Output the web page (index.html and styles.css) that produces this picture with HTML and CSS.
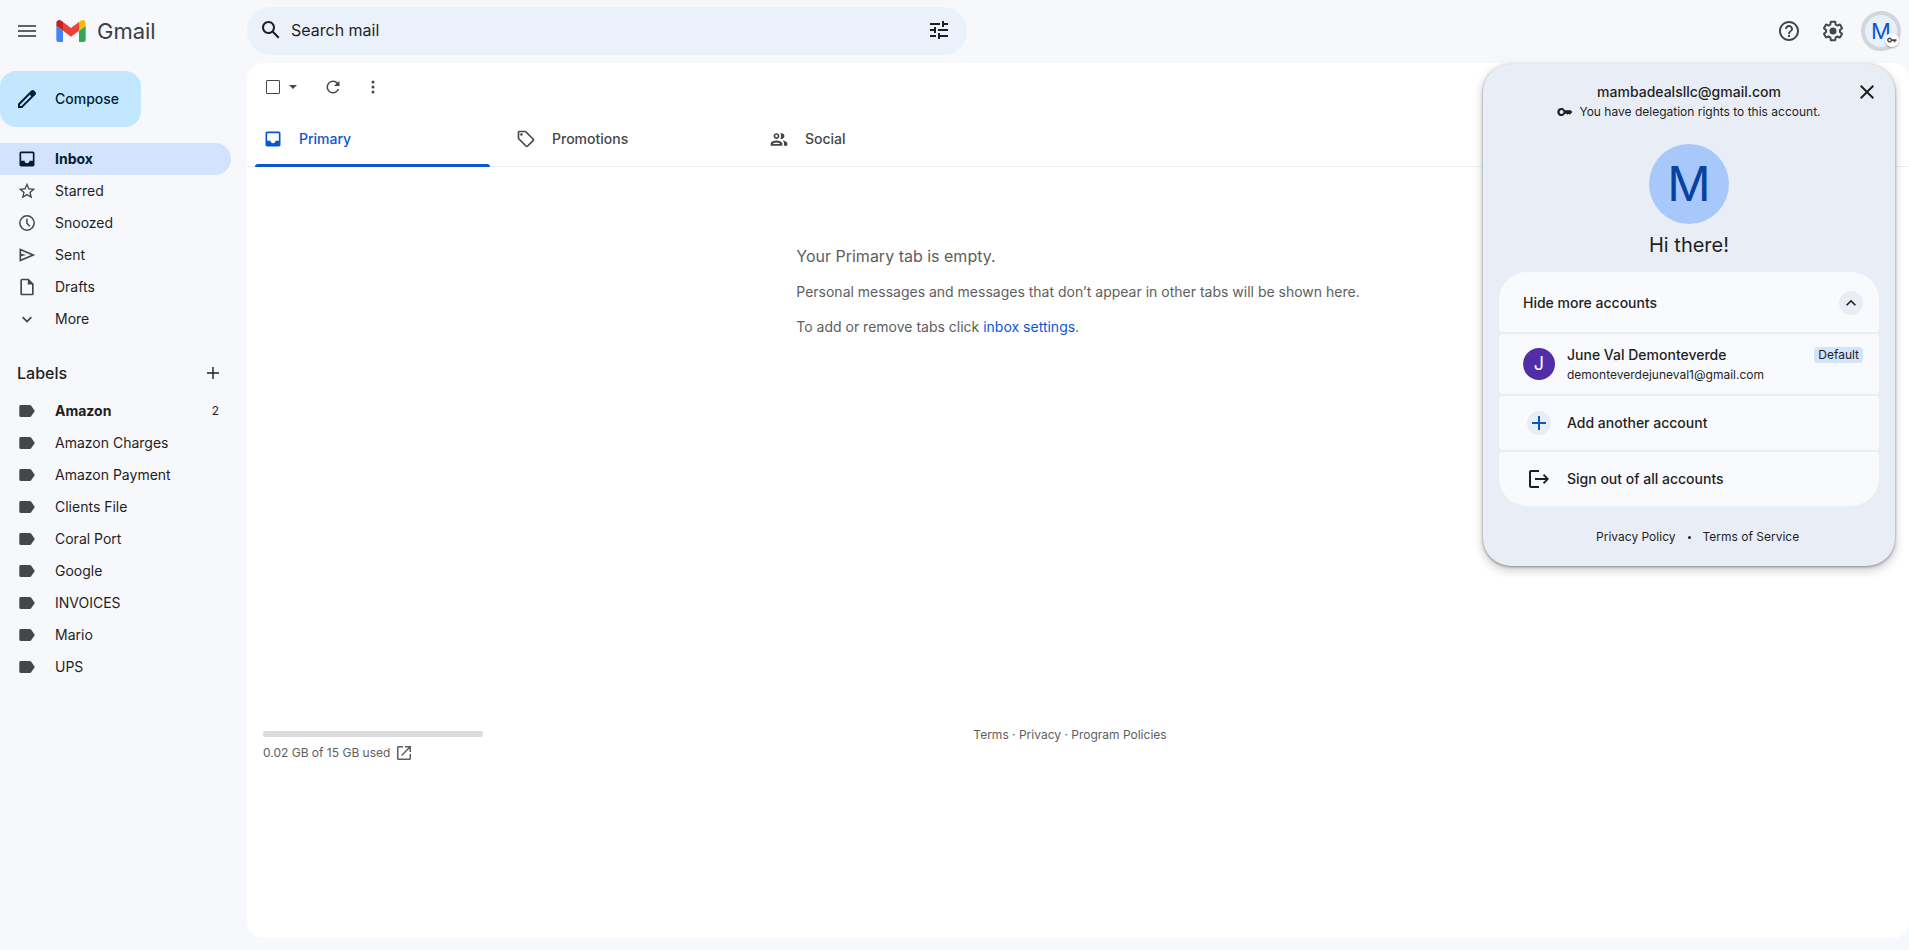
FILE: index.html
```
<!DOCTYPE html>
<html lang="en">
<head>
    <meta charset="UTF-8">
    <meta name="viewport" content="width=device-width, initial-scale=1.0">
    <title>Gmail</title>
    <link rel="stylesheet" href="styles.css">
</head>
<body>
    <header class="topbar">
        <div class="brand">
            <button class="icon-btn" aria-label="Main menu">
                <svg width="24" height="24" viewBox="0 0 24 24"><path d="M3 18h18v-2H3v2zm0-5h18v-2H3v2zm0-7v2h18V6H3z"/></svg>
            </button>
            <a class="logo" href="#">
                <svg width="30" height="22" viewBox="52 42 88 66">
                    <path fill="#4285f4" d="M58 108h14V74L52 59v43c0 3.320 2.690 6 6 6"/>
                    <path fill="#34a853" d="M120 108h14c3.320 0 6-2.690 6-6V59l-20 15"/>
                    <path fill="#fbbc04" d="M120 48v26l20-15v-8c0-7.420-8.470-11.650-14.400-7.200"/>
                    <path fill="#ea4335" d="M72 74V48l24 18 24-18v26L96 92"/>
                    <path fill="#c5221f" d="M52 51v8l20 15V48l-5.600-4.200c-5.940-4.450-14.400-.22-14.400 7.200"/>
                </svg>
                <span>Gmail</span>
            </a>
        </div>

        <form class="search">
            <button class="icon-btn" type="button" aria-label="Search">
                <svg width="24" height="24" viewBox="0 0 24 24"><path d="M20.490 19l-5.730-5.730C15.530 12.200 16 10.910 16 9.500 16 5.910 13.090 3 9.500 3S3 5.910 3 9.500 5.910 16 9.500 16c1.410 0 2.700-.47 3.770-1.240L19 20.490 20.490 19zM5 9.500C5 7.010 7.010 5 9.500 5S14 7.010 14 9.500 11.990 14 9.500 14 5 11.990 5 9.500z"/></svg>
            </button>
            <input type="text" placeholder="Search mail" aria-label="Search mail">
            <button class="icon-btn" type="button" aria-label="Show search options">
                <svg width="24" height="24" viewBox="0 0 24 24"><path d="M3 17v2h6v-2H3zM3 5v2h10V5H3zm10 16v-2h8v-2h-8v-2h-2v6h2zM7 9v2H3v2h4v2h2V9H7zm14 4v-2H11v2h10zm-6-4h2V7h4V5h-4V3h-2v6z"/></svg>
            </button>
        </form>

        <div class="top-actions">
            <button class="icon-btn" aria-label="Support">
                <svg width="24" height="24" viewBox="0 0 24 24"><path d="M11 18h2v-2h-2v2zm1-16C6.480 2 2 6.480 2 12s4.480 10 10 10 10-4.480 10-10S17.520 2 12 2zm0 18c-4.410 0-8-3.590-8-8s3.590-8 8-8 8 3.590 8 8-3.590 8-8 8zm0-14c-2.210 0-4 1.790-4 4h2c0-1.100.9-2 2-2s2 .9 2 2c0 2-3 1.750-3 5h2c0-2.250 3-2.500 3-5 0-2.210-1.790-4-4-4z"/></svg>
            </button>
            <button class="icon-btn" aria-label="Settings">
                <svg width="24" height="24" viewBox="0 0 24 24"><path d="M13.850 22.250h-3.700c-.74 0-1.360-.54-1.450-1.270l-.27-1.890c-.27-.14-.53-.29-.79-.46l-1.800.72c-.7.26-1.470-.03-1.810-.65L2.200 15.530c-.35-.66-.2-1.440.36-1.880l1.530-1.190c-.01-.15-.02-.3-.02-.46 0-.15.010-.31.020-.46l-1.520-1.190c-.59-.45-.74-1.260-.37-1.880l1.850-3.190c.34-.62 1.110-.9 1.790-.63l1.810.73c.26-.17.52-.32.78-.46l.27-1.910c.09-.7.710-1.250 1.440-1.250h3.700c.74 0 1.360.54 1.450 1.270l.27 1.890c.27.140.53.290.79.460l1.800-.72c.71-.26 1.480.030 1.820.650l1.840 3.180c.36.660.2 1.440-.36 1.880l-1.520 1.190c.01.150.02.300.02.460s-.01.310-.02.460l1.520 1.190c.56.450.72 1.230.37 1.860l-1.860 3.220c-.34.620-1.110.9-1.800.63l-1.800-.72c-.26.170-.52.320-.78.460l-.27 1.910c-.1.680-.72 1.220-1.460 1.220zm-3.230-2h2.760l.37-2.550.53-.22c.44-.18.88-.44 1.340-.78l.45-.34 2.380.96 1.380-2.400-2.030-1.580.07-.56c.03-.26.060-.51.060-.78s-.03-.53-.06-.78l-.07-.56 2.030-1.580-1.390-2.400-2.390.96-.45-.35c-.42-.32-.87-.58-1.330-.77l-.52-.22-.37-2.550h-2.760l-.37 2.550-.53.210c-.44.190-.88.440-1.340.790l-.45.330-2.380-.95-1.390 2.390 2.030 1.580-.07.560c-.03.260-.06.540-.06.790s.02.530.06.780l.07.560-2.030 1.580 1.380 2.400 2.390-.96.450.35c.43.330.86.580 1.330.77l.53.220.38 2.550z"/><circle cx="12" cy="12" r="3.500"/></svg>
            </button>
            <button class="account-btn" aria-label="Google Account">
                <span class="account-letter">M</span>
                <span class="key-badge">
                    <svg width="10" height="10" viewBox="0 0 10 10"><path d="M4.900 4.200a2.500 2.500 0 1 0 0 1.800h1.900v1.300h1.600V6h1.100V4.200zM2.600 6.200a1.100 1.100 0 1 1 0-2.200 1.100 1.100 0 0 1 0 2.200z"/></svg>
                </span>
            </button>
        </div>
    </header>

    <div class="layout">
        <nav class="sidebar">
            <button class="compose">
                <svg width="24" height="24" viewBox="0 0 24 24"><path d="M20.410 4.940l-1.350-1.350c-.78-.78-2.050-.78-2.830 0L3 16.820V21h4.180L20.410 7.770c.79-.78.79-2.050 0-2.830zm-14 14.120L5 19v-1.360l9.820-9.820 1.410 1.410-9.820 9.830z"/></svg>
                Compose
            </button>

            <ul class="nav-list">
                <li><a class="nav-item active" href="#">
                    <svg width="20" height="20" viewBox="0 0 24 24"><path d="M19 3H5c-1.100 0-2 .9-2 2v14c0 1.100.9 2 2 2h14c1.100 0 2-.9 2-2V5c0-1.100-.9-2-2-2zm0 11h-4c0 1.660-1.350 3-3 3s-3-1.340-3-3H5V5h14v9z"/></svg>
                    <span>Inbox</span></a></li>
                <li><a class="nav-item" href="#">
                    <svg width="20" height="20" viewBox="0 0 24 24"><path d="M22 9.240l-7.190-.62L12 2 9.190 8.630 2 9.240l5.460 4.730L5.820 21 12 17.270 18.180 21l-1.630-7.030L22 9.240zM12 15.400l-3.760 2.270 1-4.280-3.320-2.880 4.380-.38L12 6.100l1.710 4.040 4.380.38-3.320 2.880 1 4.280L12 15.400z"/></svg>
                    <span>Starred</span></a></li>
                <li><a class="nav-item" href="#">
                    <svg width="20" height="20" viewBox="0 0 24 24"><path d="M12 2.500a9.500 9.500 0 1 0 0 19 9.500 9.500 0 0 0 0-19zm0 17.200a7.700 7.700 0 1 1 0-15.400 7.700 7.700 0 0 1 0 15.400zM12.800 7H11v5.700l3.800 3.700 1.200-1.200-3.200-3.200z"/></svg>
                    <span>Snoozed</span></a></li>
                <li><a class="nav-item" href="#">
                    <svg width="20" height="20" viewBox="0 0 24 24"><path d="M3 4v16l19-8L3 4zm2 13v-3.500l6-1.500-6-1.500V7l11.850 5L5 17z"/></svg>
                    <span>Sent</span></a></li>
                <li><a class="nav-item" href="#">
                    <svg width="20" height="20" viewBox="0 0 24 24"><path d="M14 2H6c-1.100 0-2 .9-2 2v16c0 1.100.9 2 2 2h12c1.100 0 2-.9 2-2V8l-6-6zm4 18H6V4h7v5h5v11z"/></svg>
                    <span>Drafts</span></a></li>
                <li><a class="nav-item" href="#">
                    <svg width="20" height="20" viewBox="0 0 24 24"><path d="M12 16.400l-6-6L7.400 9l4.600 4.600L16.600 9l1.400 1.400z"/></svg>
                    <span>More</span></a></li>
            </ul>

            <div class="labels-head">
                <h2>Labels</h2>
                <button class="plain-btn" aria-label="Create new label">
                    <svg width="20" height="20" viewBox="0 0 20 20"><path d="M16 10.700h-5.300V16H9.300v-5.300H4V9.300h5.300V4h1.400v5.300H16z"/></svg>
                </button>
            </div>

            <svg width="0" height="0" class="sprite">
                <symbol id="label" viewBox="0 0 20 20"><path d="M12.800 4H3.700C2.900 4 2.300 4.600 2.300 5.400v9.200c0 .8.6 1.400 1.400 1.400h9.100c.6 0 1.100-.3 1.400-.7L17.800 10l-3.600-5.300c-.3-.4-.8-.7-1.400-.7z"/></symbol>
            </svg>
            <ul class="nav-list labels">
                <li><a class="nav-item unread" href="#"><svg width="20" height="20"><use href="#label"/></svg><span>Amazon</span><span class="count">2</span></a></li>
                <li><a class="nav-item" href="#"><svg width="20" height="20"><use href="#label"/></svg><span>Amazon Charges</span></a></li>
                <li><a class="nav-item" href="#"><svg width="20" height="20"><use href="#label"/></svg><span>Amazon Payment</span></a></li>
                <li><a class="nav-item" href="#"><svg width="20" height="20"><use href="#label"/></svg><span>Clients File</span></a></li>
                <li><a class="nav-item" href="#"><svg width="20" height="20"><use href="#label"/></svg><span>Coral Port</span></a></li>
                <li><a class="nav-item" href="#"><svg width="20" height="20"><use href="#label"/></svg><span>Google</span></a></li>
                <li><a class="nav-item" href="#"><svg width="20" height="20"><use href="#label"/></svg><span>INVOICES</span></a></li>
                <li><a class="nav-item" href="#"><svg width="20" height="20"><use href="#label"/></svg><span>Mario</span></a></li>
                <li><a class="nav-item" href="#"><svg width="20" height="20"><use href="#label"/></svg><span>UPS</span></a></li>
            </ul>
        </nav>

        <main class="panel">
            <div class="toolbar">
                <div class="select-all">
                    <input type="checkbox" aria-label="Select all">
                    <button class="plain-btn" aria-label="Select options">
                        <svg width="20" height="20" viewBox="0 0 20 20"><path d="M6 8l4 4 4-4z"/></svg>
                    </button>
                </div>
                <button class="icon-btn" aria-label="Refresh">
                    <svg width="20" height="20" viewBox="0 0 20 20"><path d="M14.950 5.050A7 7 0 0 0 10 3 6.500 6.500 0 1 0 16.200 11.500h-1.600A5 5 0 1 1 13.500 6L11 8.500h5.500V3.500z" transform="translate(0 .5)"/></svg>
                </button>
                <button class="icon-btn" aria-label="More options">
                    <svg width="20" height="20" viewBox="0 0 20 20"><circle cx="10" cy="5" r="1.500"/><circle cx="10" cy="10" r="1.500"/><circle cx="10" cy="15" r="1.500"/></svg>
                </button>
            </div>

            <div class="tabs" role="tablist">
                <button class="tab selected" role="tab" aria-selected="true">
                    <svg width="20" height="20" viewBox="0 0 24 24"><path d="M19 3H5c-1.100 0-2 .9-2 2v14c0 1.100.9 2 2 2h14c1.100 0 2-.9 2-2V5c0-1.100-.9-2-2-2zm0 11h-4c0 1.660-1.350 3-3 3s-3-1.340-3-3H5V5h14v9z"/></svg>
                    Primary
                </button>
                <button class="tab" role="tab" aria-selected="false">
                    <svg width="20" height="20" viewBox="0 0 24 24"><path d="M21.410 11.580l-9-9C12.050 2.220 11.550 2 11 2H4c-1.100 0-2 .9-2 2v7c0 .55.220 1.050.590 1.420l9 9c.36.360.86.580 1.410.58s1.050-.22 1.410-.59l7-7c.37-.36.590-.86.590-1.410s-.23-1.060-.59-1.420zM13 20.010L4 11V4h7v-.010l9 9-7 7.020z"/><circle cx="6.500" cy="6.500" r="1.500"/></svg>
                    Promotions
                </button>
                <button class="tab" role="tab" aria-selected="false">
                    <svg width="20" height="20" viewBox="0 0 24 24"><path d="M9 13.750c-2.340 0-7 1.170-7 3.500V20h14v-2.750c0-2.330-4.660-3.500-7-3.500zM4.340 18c.84-.78 2.870-1.750 4.660-1.750s3.820.97 4.660 1.750H4.340zM9 12c1.930 0 3.500-1.570 3.500-3.500S10.930 5 9 5 5.500 6.570 5.500 8.500 7.070 12 9 12zm0-5c.83 0 1.500.67 1.500 1.500S9.830 10 9 10s-1.500-.67-1.500-1.500S8.170 7 9 7zm7.040 6.810c1.160.84 1.960 1.960 1.960 3.440V20h4v-2.750c0-2.020-3.500-3.170-5.960-3.440zM15 12c1.930 0 3.500-1.570 3.500-3.500S16.930 5 15 5c-.54 0-1.040.13-1.500.35.630.89 1 1.980 1 3.150s-.37 2.260-1 3.150c.46.220.96.350 1.500.35z"/></svg>
                    Social
                </button>
            </div>

            <section class="empty">
                <div class="empty-text">
                    <h1>Your Primary tab is empty.</h1>
                    <p>Personal messages and messages that don’t appear in other tabs will be shown here.</p>
                    <p>To add or remove tabs click <a href="#">inbox settings</a>.</p>
                </div>
            </section>

            <footer class="page-footer">
                <div class="storage">
                    <div class="storage-bar"></div>
                    <a class="storage-link" href="#">0.02 GB of 15 GB used
                        <svg width="16" height="16" viewBox="0 0 16 16"><path d="M7 1v1.500H2.500v11h11V9H15v4.500c0 .8-.7 1.500-1.500 1.500h-11C1.700 15 1 14.300 1 13.500v-11C1 1.700 1.700 1 2.500 1zm2 0h6v6h-1.500V3.600l-7.400 7.300-1-1 7.300-7.400H9z"/></svg>
                    </a>
                </div>
                <div class="legal"><a href="#">Terms</a> · <a href="#">Privacy</a> · <a href="#">Program Policies</a></div>
            </footer>
        </main>
    </div>

    <aside class="account-menu">
        <button class="close-btn" aria-label="Close">
            <svg width="24" height="24" viewBox="0 0 24 24"><path d="M19 6.410L17.590 5 12 10.590 6.410 5 5 6.410 10.590 12 5 17.590 6.410 19 12 13.410 17.590 19 19 17.590 13.410 12z"/></svg>
        </button>
        <div class="account-email">mambadealsllc@gmail.com</div>
        <div class="delegation">
            <svg width="16" height="16" viewBox="0 0 16 16"><path d="M7.900 6.300A4 4 0 1 0 7.900 9.700H9.500l1 1 1.200-1 1.200 1 2.400-2.600-1.600-1.800zM4.500 10a2 2 0 1 1 0-4 2 2 0 0 1 0 4z"/></svg>
            You have delegation rights to this account.
        </div>
        <div class="big-avatar">M</div>
        <div class="greeting">Hi there!</div>

        <div class="cards">
            <button class="card toggle">
                <span>Hide more accounts</span>
                <span class="round-icon">
                    <svg width="20" height="20" viewBox="0 0 24 24"><path d="M12 8l-6 6 1.410 1.410L12 10.830l4.590 4.580L18 14z"/></svg>
                </span>
            </button>
            <button class="card person">
                <span class="small-avatar">J</span>
                <span class="person-text">
                    <span class="person-name">June Val Demonteverde</span>
                    <span class="person-email">demonteverdejuneval1@gmail.com</span>
                </span>
                <span class="default-tag">Default</span>
            </button>
            <button class="card">
                <span class="card-icon"><span class="round-icon blue">
                    <svg width="20" height="20" viewBox="0 0 20 20"><path d="M17 11h-6v6H9v-6H3V9h6V3h2v6h6z"/></svg>
                </span></span>
                <span>Add another account</span>
            </button>
            <button class="card">
                <span class="card-icon">
                    <svg width="24" height="24" viewBox="0 0 24 24"><path d="M4 3h8v2H4v14h8v2H4c-1.100 0-2-.9-2-2V5c0-1.100.9-2 2-2zm13.200 4.100L22 12l-4.800 4.900-1.300-1.300 2.700-2.700H8v-1.800h10.600l-2.700-2.700z"/></svg>
                </span>
                <span>Sign out of all accounts</span>
            </button>
        </div>

        <div class="menu-footer">
            <a href="#">Privacy Policy</a>
            <span class="dot"></span>
            <a href="#">Terms of Service</a>
        </div>
    </aside>
</body>
</html>
```

FILE: styles.css
```
* {
    box-sizing: border-box;
}

body {
    margin: 0;
    min-height: 100vh;
    display: flex;
    flex-direction: column;
    background-color: #f6f8fc;
    font-family: Inter, "Liberation Sans", sans-serif;
    font-size: 14px;
    line-height: 20px;
    color: #1f1f1f;
}

a {
    color: inherit;
    text-decoration: none;
}

button {
    font: inherit;
    color: inherit;
    border: none;
    background: none;
    padding: 0;
    cursor: pointer;
}

svg {
    display: block;
    flex: none;
    fill: currentColor;
}

.sprite {
    position: absolute;
}

.icon-btn {
    width: 40px;
    height: 40px;
    display: flex;
    align-items: center;
    justify-content: center;
    flex: none;
}

.plain-btn {
    display: flex;
}

/* top bar */
.topbar {
    display: flex;
    height: 63px;
    padding: 7px 8px 8px 0;
}

.brand {
    width: 247px;
    flex: none;
    display: flex;
    align-items: center;
    padding-left: 7px;
    color: #5f6368;
}

.logo {
    display: flex;
    align-items: center;
    gap: 11px;
    margin-left: 9px;
    font-size: 22px;
    line-height: 24px;
    color: #3c4043;
}

.search {
    width: 720px;
    height: 48px;
    display: flex;
    align-items: center;
    padding: 0 8px 2px 4px;
    background-color: #eaf1fb;
    border-radius: 24px;
}

.search input {
    flex: 1;
    min-width: 0;
    border: none;
    outline: none;
    padding: 0;
    background: none;
    font: inherit;
    font-size: 16px;
}

.search input::placeholder {
    color: #1f1f1f;
    opacity: 1;
}

.top-actions {
    margin-left: auto;
    display: flex;
    align-items: center;
    gap: 4px;
    color: #444746;
}

.account-btn {
    position: relative;
    width: 40px;
    height: 40px;
    margin-left: 4px;
    border: 4px solid #d3d6da;
    border-radius: 50%;
    background-color: #e8f0fe;
}

.account-letter {
    font-size: 22px;
    line-height: 32px;
    color: #0b57d0;
}

.key-badge {
    position: absolute;
    right: -2px;
    bottom: 0;
    width: 14px;
    height: 14px;
    display: flex;
    align-items: center;
    justify-content: center;
    border-radius: 50%;
    background-color: #fff;
    box-shadow: 0 1px 2px rgba(60, 64, 67, 0.4);
}

/* sidebar */
.layout {
    flex: 1;
    display: flex;
    padding-bottom: 12px;
}

.sidebar {
    width: 247px;
    flex: none;
    padding: 8px 16px 0 0;
}

.compose {
    display: flex;
    align-items: center;
    gap: 16px;
    height: 56px;
    padding: 0 22px 0 15px;
    margin-bottom: 16px;
    border-radius: 16px;
    background-color: #c2e7ff;
    color: #001d35;
    font-weight: 500;
}

.nav-list {
    list-style: none;
    margin: 0;
    padding: 0;
}

.nav-item {
    display: flex;
    align-items: center;
    gap: 18px;
    height: 32px;
    padding: 0 12px 0 17px;
    border-radius: 0 16px 16px 0;
}

.nav-item svg {
    color: #444746;
}

.nav-item.active {
    background-color: #d3e3fd;
    font-weight: 700;
}

.nav-item.active,
.nav-item.active svg {
    color: #001d35;
}

.nav-item.unread {
    font-weight: 700;
}

.count {
    margin-left: auto;
    font-size: 12px;
    font-weight: 400;
}

.labels-head {
    display: flex;
    align-items: center;
    justify-content: space-between;
    padding: 28px 8px 12px 17px;
}

.labels-head h2 {
    margin: 0;
    font-size: 16px;
    font-weight: 500;
    line-height: 20px;
}

/* mail panel */
.panel {
    flex: 1;
    min-width: 0;
    background-color: #fff;
    border-radius: 16px;
    color: #444746;
}

.toolbar {
    display: flex;
    align-items: center;
    height: 48px;
    padding-left: 17px;
}

.select-all {
    display: flex;
    align-items: center;
    gap: 1px;
    margin-right: 10px;
}

.select-all input {
    appearance: none;
    width: 14px;
    height: 14px;
    margin: 0 2px;
    border: 1px solid #444746;
    border-radius: 1px;
}

.tabs {
    display: flex;
    height: 56px;
    border-bottom: 1px solid #eceff1;
}

.tab {
    position: relative;
    width: 253px;
    display: flex;
    align-items: center;
    gap: 16px;
    padding: 0 16px;
    font-weight: 500;
}

.tab.selected {
    color: #0b57d0;
}

.tab.selected::after {
    content: "";
    position: absolute;
    left: 8px;
    right: 10px;
    bottom: -1px;
    height: 3px;
    border-radius: 3px 3px 0 0;
    background-color: #0b57d0;
}

.empty {
    display: flex;
    justify-content: center;
    height: 564px;
    padding-top: 77px;
    color: #5e5e5e;
}

.empty h1 {
    margin: 0 0 14px;
    font-size: 16px;
    font-weight: 400;
    line-height: 24px;
}

.empty p {
    margin: 0 0 15px;
}

.empty a {
    color: #0b57d0;
}

.page-footer {
    display: grid;
    grid-template-columns: 1fr auto 1fr;
    align-items: start;
    margin-top: -4px;
    padding-right: 16px;
    font-size: 12px;
    line-height: 16px;
    color: #5e5e5e;
}

.storage {
    padding: 4px 0 0 16px;
}

.storage-bar {
    width: 220px;
    height: 6px;
    margin-bottom: 8px;
    border-radius: 2px;
    background-color: #dadce0;
}

.storage-link {
    display: flex;
    align-items: center;
    gap: 6px;
}

.legal {
    padding-top: 0;
}

/* account menu */
.account-menu {
    position: absolute;
    top: 64px;
    right: 14px;
    width: 412px;
    padding: 18px 16px 19px;
    border-radius: 28px;
    background-color: #e9eef6;
    box-shadow: 0 1px 3px rgba(0, 0, 0, 0.4), 0 4px 8px 2px rgba(0, 0, 0, 0.15);
    text-align: center;
}

.close-btn {
    position: absolute;
    top: 16px;
    right: 16px;
}

.account-email {
    font-weight: 500;
}

.delegation {
    display: flex;
    align-items: center;
    justify-content: center;
    gap: 6px;
    font-size: 12px;
}

.big-avatar {
    width: 80px;
    margin: 22px auto 7px;
    border-radius: 50%;
    background-color: #a8c7fa;
    color: #0842a0;
    font-size: 48px;
    line-height: 80px;
}

.greeting {
    font-size: 20px;
    line-height: 28px;
}

.cards {
    display: flex;
    flex-direction: column;
    gap: 2px;
    margin-top: 13px;
    border-radius: 28px;
    overflow: hidden;
}

.card {
    display: flex;
    align-items: center;
    gap: 12px;
    min-height: 54px;
    padding: 0 16px 0 24px;
    border-radius: 4px;
    background-color: #f8fafd;
    font-weight: 500;
    text-align: left;
}

.card.toggle,
.card.person {
    min-height: 60px;
}

.card.toggle {
    justify-content: space-between;
    padding-top: 2px;
}

.card-icon {
    width: 32px;
    display: flex;
    justify-content: center;
}

.round-icon {
    width: 24px;
    height: 24px;
    display: flex;
    align-items: center;
    justify-content: center;
    border-radius: 50%;
    background-color: #e9eef6;
}

.round-icon.blue {
    color: #0b57d0;
}

.small-avatar {
    width: 32px;
    border-radius: 50%;
    background-color: #512da8;
    color: #fff;
    font-size: 18px;
    font-weight: 400;
    line-height: 32px;
    text-align: center;
}

.person-text {
    flex: 1;
    display: flex;
    flex-direction: column;
    padding-top: 2px;
}

.person-email {
    font-size: 12px;
    font-weight: 400;
}

.default-tag {
    align-self: flex-start;
    margin-top: 13px;
    padding: 0 4px;
    border-radius: 4px;
    background-color: #d3e3fd;
    font-size: 12px;
    font-weight: 400;
    line-height: 16px;
}

.menu-footer {
    display: grid;
    grid-template-columns: 1fr auto 1fr;
    align-items: center;
    gap: 12px;
    margin-top: 21px;
    font-size: 12px;
}

.menu-footer a:first-child {
    text-align: right;
}

.menu-footer a:last-child {
    text-align: left;
}

.dot {
    width: 3px;
    height: 3px;
    border-radius: 50%;
    background-color: #1f1f1f;
}
```
